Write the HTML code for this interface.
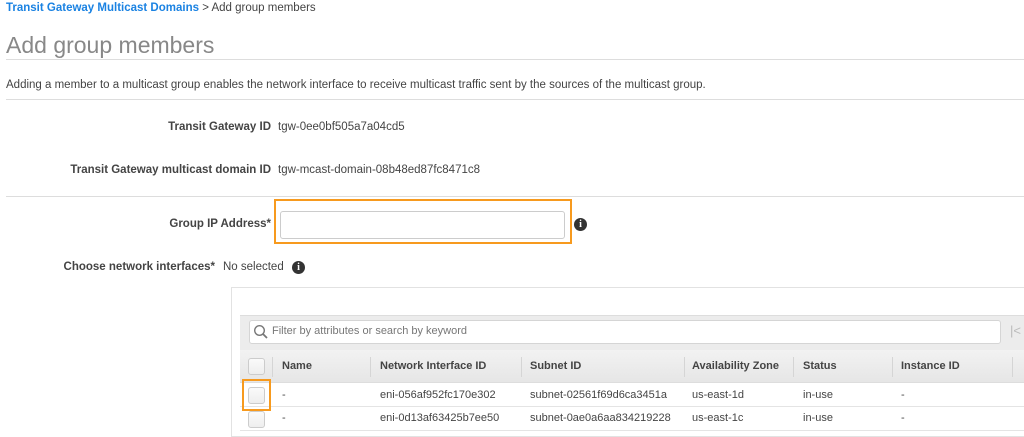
<!DOCTYPE html>
<html><head><style>
*{margin:0;padding:0;box-sizing:border-box}
body{width:1024px;height:431px;overflow:hidden;background:#fff;font-family:"Liberation Sans",Arial,sans-serif;color:#444;position:relative}
.a{position:absolute;white-space:nowrap}
.lbl{font-weight:bold;font-size:11.5px;color:#444;text-align:right}
.v{font-size:11.5px;color:#444}
.hr{position:absolute;left:6px;right:0;height:1px;background:#ddd}
.cb{position:absolute;width:17px;height:17px;border:1px solid #ccc;border-radius:3px;background:linear-gradient(#fafafa,#eee)}
.th{font-weight:bold;font-size:11px;color:#444}
.td{font-size:11px;color:#444}
.div{position:absolute;width:1px;background:#d5d5d5;top:357px;height:20px}
.info{position:absolute;width:13px;height:13px;border-radius:50%;background:#333;color:#fff;font:bold 10px "Liberation Serif",serif;text-align:center;line-height:13px}
</style></head><body>
<div class="a" style="left:6px;top:2px;font-size:11.5px"><span style="color:#1a82e2;font-weight:bold">Transit Gateway Multicast Domains</span> &gt; Add group members</div>
<div class="a" style="left:6px;top:32px;font-size:23px;color:#888">Add group members</div>
<div class="hr" style="top:59px"></div>
<div class="a v" style="left:6px;top:79px">Adding a member to a multicast group enables the network interface to receive multicast traffic sent by the sources of the multicast group.</div>
<div class="hr" style="top:99px"></div>
<div class="a lbl" style="right:753px;top:121px">Transit Gateway ID</div>
<div class="a v" style="left:278px;top:121px">tgw-0ee0bf505a7a04cd5</div>
<div class="a lbl" style="right:753px;top:164px">Transit Gateway multicast domain ID</div>
<div class="a v" style="left:278px;top:164px">tgw-mcast-domain-08b48ed87fc8471c8</div>
<div class="hr" style="top:196px"></div>
<div class="a lbl" style="right:753px;top:218px">Group IP Address*</div>
<div class="a" style="left:274px;top:199px;width:298px;height:45px;border:2px solid #f79a1e"></div>
<div class="a" style="left:280px;top:211px;width:285px;height:28px;border:1px solid #ccc;border-radius:3px"></div>
<div class="info" style="left:574px;top:218px">i</div>
<div class="a lbl" style="right:809px;top:261px">Choose network interfaces*</div>
<div class="a v" style="left:223px;top:261px">No selected</div>
<div class="info" style="left:292px;top:261px">i</div>
<div class="a" style="left:231px;top:287px;width:800px;height:150px;border:1px solid #e2e2e2"></div>
<div class="a" style="left:240px;top:315px;width:800px;height:35px;background:#ececec;border-top:1px solid #ddd"></div>
<div class="a" style="left:249px;top:320px;width:752px;height:24px;background:#fff;border:1px solid #d5d5d5;border-radius:3px"></div>
<svg class="a" style="left:253px;top:324px" width="16" height="16" viewBox="0 0 16 16"><circle cx="6.5" cy="6.5" r="4.8" fill="none" stroke="#777" stroke-width="1.4"/><path d="M10 10l4 4" stroke="#777" stroke-width="1.8"/></svg>
<div class="a" style="left:272px;top:325px;font-size:11px;color:#777">Filter by attributes or search by keyword</div>
<div class="a" style="left:1010px;top:323px;font-size:13px;color:#bbb">|&lt;</div>
<div class="a" style="left:240px;top:350px;width:800px;height:33px;background:linear-gradient(#f2f2f2,#e6e6e6);border-bottom:1px solid #ddd"></div>
<div class="cb" style="left:248px;top:358px"></div>
<div class="div" style="left:272px"></div><div class="div" style="left:370px"></div><div class="div" style="left:521px"></div><div class="div" style="left:684px"></div><div class="div" style="left:793px"></div><div class="div" style="left:892px"></div><div class="div" style="left:1012px"></div>
<div class="a th" style="left:282px;top:360px">Name</div>
<div class="a th" style="left:380px;top:360px">Network Interface ID</div>
<div class="a th" style="left:530px;top:360px">Subnet ID</div>
<div class="a th" style="left:692px;top:360px">Availability Zone</div>
<div class="a th" style="left:803px;top:360px">Status</div>
<div class="a th" style="left:901px;top:360px">Instance ID</div>
<div class="a" style="left:240px;top:406px;width:800px;height:1px;background:#e4e4e4"></div>
<div class="a" style="left:240px;top:430px;width:800px;height:1px;background:#e4e4e4"></div>
<div class="cb" style="left:248px;top:387px"></div>
<div class="a" style="left:242px;top:379px;width:29px;height:32px;border:2px solid #f79a1e"></div>
<div class="a td" style="left:282px;top:389px">-</div>
<div class="a td" style="left:380px;top:389px">eni-056af952fc170e302</div>
<div class="a td" style="left:530px;top:389px">subnet-02561f69d6ca3451a</div>
<div class="a td" style="left:692px;top:389px">us-east-1d</div>
<div class="a td" style="left:803px;top:389px">in-use</div>
<div class="a td" style="left:901px;top:389px">-</div>
<div class="cb" style="left:248px;top:411px"></div>
<div class="a td" style="left:282px;top:412px">-</div>
<div class="a td" style="left:380px;top:412px">eni-0d13af63425b7ee50</div>
<div class="a td" style="left:530px;top:412px">subnet-0ae0a6aa834219228</div>
<div class="a td" style="left:692px;top:412px">us-east-1c</div>
<div class="a td" style="left:803px;top:412px">in-use</div>
<div class="a td" style="left:901px;top:412px">-</div>
</body></html>
